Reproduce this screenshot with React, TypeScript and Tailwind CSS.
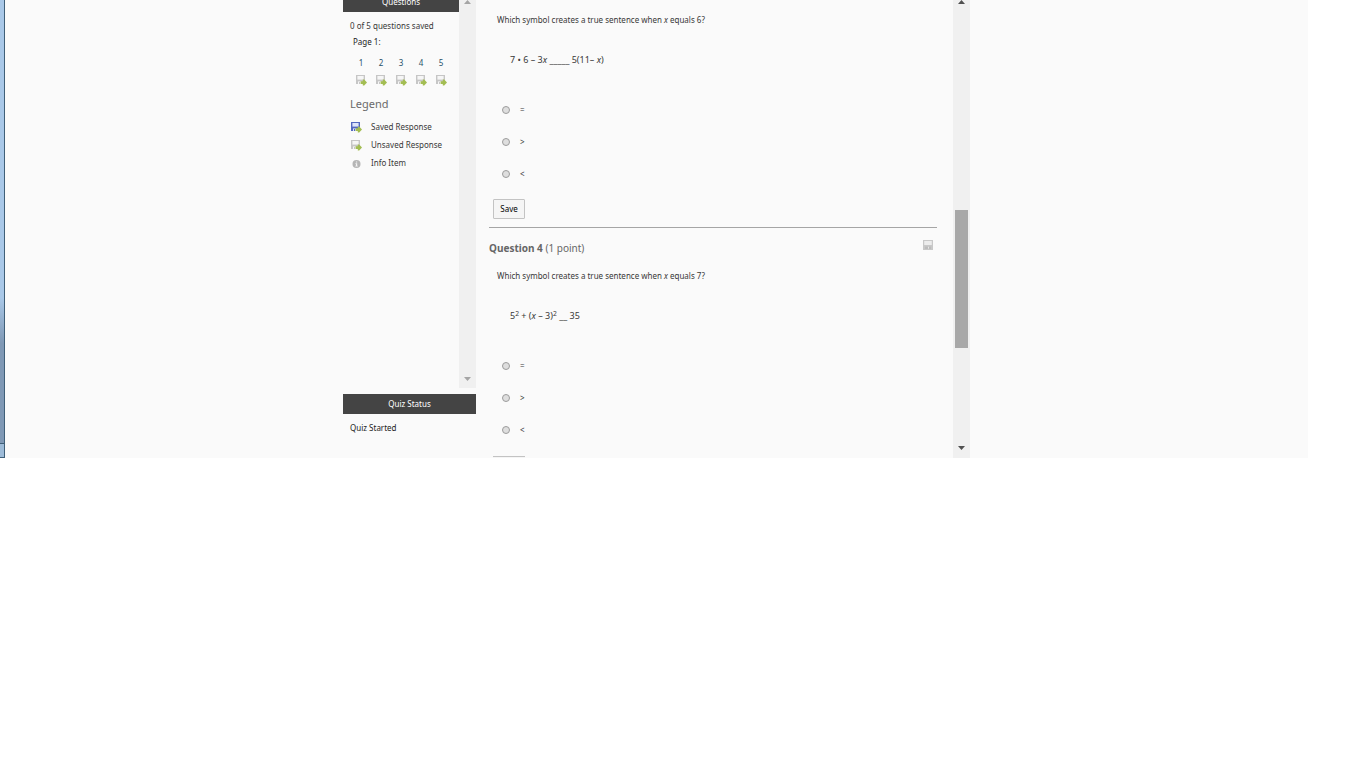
import type { ReactNode } from "react";

type DiskArrowProps = { disk?: string; label?: string };

function DiskArrow({ disk = "#c6c6c6", label = "#f6f6f6" }: DiskArrowProps) {
  return (
    <svg viewBox="0 0 12 12" className="size-3" aria-hidden="true">
      <path d="M1 1h9v9H1z" fill={disk} />
      <path d="M2.4 2h6.2v3.6H2.4z" fill={label} />
      <path d="M3 7.4h3.4V10H3z" fill={label} />
      <path d="M4 8h1v2H4z" fill={disk} />
      <path d="M5.6 7.3h2.2V5.6h1.4L12 8.6l-2.8 3H7.8v-1.7H5.6z" fill="#a3bd52" />
    </svg>
  );
}

function Disk() {
  return (
    <svg viewBox="0 0 10 10" className="size-[10px]" aria-hidden="true">
      <path d="M0 0h10v10H0z" fill="#c8c8c8" />
      <path d="M1.2 1h7.6v4H1.2z" fill="#ececec" />
      <path d="M2 6.6h6V9H2z" fill="#bcbcbc" />
      <path d="M5 6.8h1v2H5z" fill="#e6e6e6" />
    </svg>
  );
}

function Info() {
  return (
    <svg viewBox="0 0 12 12" className="size-3" aria-hidden="true">
      <circle cx="6.5" cy="7" r="4" fill="#b5b5b5" />
      <path d="M5.9 4.4h1.3v1.1H5.9zM5.4 6.2h1.8v2.5h.6v.8H5.3v-.8h.6V7h-.5z" fill="#f4f4f4" />
    </svg>
  );
}

function ArrowUp({ fill = "#505050" }: { fill?: string }) {
  return (
    <svg viewBox="0 0 7 4" className="h-1 w-[7px]" aria-hidden="true">
      <path d="M0 4 3.5 0 7 4z" fill={fill} />
    </svg>
  );
}

function ArrowDown({ fill = "#505050" }: { fill?: string }) {
  return (
    <svg viewBox="0 0 7 4" className="h-1 w-[7px]" aria-hidden="true">
      <path d="M0 0h7L3.5 4z" fill={fill} />
    </svg>
  );
}

const pages = [1, 2, 3, 4, 5];

function Sidebar() {
  return (
    <aside className="flex w-[133px] shrink-0 flex-col">
      <div className="flex flex-1">
        <div className="flex-1">
          <h2 className="flex h-3 items-end justify-center overflow-hidden bg-[#444444] text-white">
            <span className="leading-5">Questions</span>
          </h2>
          <div className="pt-1 pl-[7px]">
            <p className="leading-5">0 of 5 questions saved</p>
            <p className="pl-[3px] leading-3 text-[#222222]">Page 1:</p>
            <ol className="mt-[7px] flex pl-px">
              {pages.map((page) => (
                <li key={page} className="w-5">
                  <a href={`#question-${page}`} className="flex flex-col items-center text-[#1f5068]">
                    <span className="leading-4">{page}</span>
                    <span className="mt-[3px]">
                      <DiskArrow />
                    </span>
                  </a>
                </li>
              ))}
            </ol>
            <h3 className="mt-2 text-[11px] leading-5 text-[#6a6a6a]">Legend</h3>
            <ul className="mt-1">
              <li className="flex h-[18px] items-center gap-[9px]">
                <DiskArrow disk="#5468c0" label="#dfe5fa" />
                Saved Response
              </li>
              <li className="flex h-[18px] items-center gap-[9px]">
                <DiskArrow />
                Unsaved Response
              </li>
              <li className="flex h-[18px] items-center gap-[9px]">
                <Info />
                Info Item
              </li>
            </ul>
          </div>
        </div>
        <div className="flex w-[17px] flex-col items-center justify-between bg-[#f0f0f0] pb-[7px]">
          <ArrowUp fill="#a5a5a5" />
          <ArrowDown fill="#a5a5a5" />
        </div>
      </div>
      <h2 className="mt-[6px] bg-[#444444] text-center leading-5 text-white">Quiz Status</h2>
      <p className="pt-1 pb-5 pl-[7px] leading-5 text-[#222222]">Quiz Started</p>
    </aside>
  );
}

type QuestionProps = { name: string; value: number; children: ReactNode };

function Question({ name, value, children }: QuestionProps) {
  return (
    <fieldset>
      <p className="pl-2 leading-5">
        Which symbol creates a true sentence when <i>x</i> equals {value}?
      </p>
      <p className="mt-5 h-5 pl-[21px] text-[9px] leading-5 whitespace-pre">{children}</p>
      <div className="mt-6">
        {["=", ">", "<"].map((symbol) => (
          <label key={symbol} className="flex h-8 items-center gap-[10px] pl-[13px]">
            <input
              type="radio"
              name={name}
              className="size-2 appearance-none rounded-full border border-[#9c9c9c] bg-[#dedede]"
            />
            {symbol}
          </label>
        ))}
      </div>
    </fieldset>
  );
}

export default function App() {
  return (
    <div className="min-h-screen bg-white font-['Noto_Sans',sans-serif] text-[8px] text-[#383838]">
      <div className="mr-[58px] flex bg-[#fafafa]">
        <div className="flex w-[5px] flex-col border-r border-[#3f5f78] bg-linear-to-b from-[#a9c8e8] from-65% to-[#7f98b5] to-75%">
          <div className="mt-auto h-[15px] border-y border-[#3f5f78] bg-[#9dbbd8]" />
        </div>
        <div className="mx-auto flex w-[627px]">
          <Sidebar />
          <main className="flex-1 pt-[10px] pr-4 pl-[13px]">
            <Question name="question-3" value={6}>
              7 • 6 – 3<i>x</i> _____ 5(11– <i>x</i>)
            </Question>
            <button
              type="button"
              className="mt-[9px] ml-1 block h-5 w-8 rounded-[1px] border border-[#c3c3c3] bg-[#f5f5f5] text-black"
            >
              Save
            </button>
            <hr className="mt-2 border-[#a5a5a5]" />
            <div className="mt-[10px] mb-2 flex h-5 justify-between pr-1">
              <h2 className="text-[10px] leading-5 text-[#666666]">
                <b>Question 4</b> (1 point)
              </h2>
              <span className="mt-[2px]">
                <Disk />
              </span>
            </div>
            <Question name="question-4" value={7}>
              5<sup>2</sup> + (<i>x</i> – 3)<sup>2</sup> __ 35
            </Question>
            <button
              type="button"
              aria-label="Save"
              className="mt-[10px] ml-1 block h-[2px] w-8 border-t border-[#c3c3c3] bg-[#f5f5f5]"
            />
          </main>
          <div className="flex w-[17px] flex-col items-center bg-[#f0f0f0] pb-2">
            <ArrowUp />
            <div className="mt-[206px] h-[138px] w-[13px] bg-[#a8a8a8]" />
            <div className="mt-auto">
              <ArrowDown />
            </div>
          </div>
        </div>
      </div>
    </div>
  );
}
